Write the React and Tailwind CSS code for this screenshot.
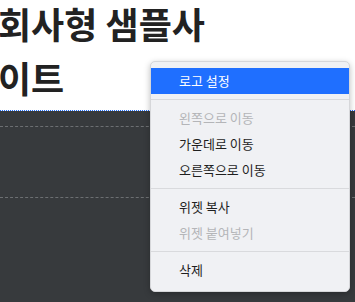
import React from "react";

const font = { fontFamily: '"Noto Sans CJK KR", "Noto Sans", sans-serif' };

function Item({ children, active, disabled }) {
  return (
    <div
      className={
        "h-[26px] flex items-center pl-[28px] text-[13px] " +
        (active
          ? "bg-[#1f6fff] text-white"
          : disabled
          ? "text-[#b4b5b8]"
          : "text-[#1f1f1f]")
      }
    >
      {children}
    </div>
  );
}

function Sep() {
  return <div className="h-px bg-[#d9dadd] my-[5px]" />;
}

export default function App() {
  return (
    <div className="relative w-[355px] h-[302px] overflow-hidden bg-white" style={font}>
      <div className="h-[110px] w-[218px] -ml-[2px] flow-root">
        <h1 className="relative -top-[4px] text-[36px] font-bold leading-[54px] text-[#222]">
          회사형 샘플사이트
        </h1>
      </div>
      <div className="h-px border-t border-dotted border-[#1f6fff]" />
      <div className="h-[191px] bg-[#373a3d] pt-[15px]">
        <div className="border-t border-dashed border-[#6c6f72]" />
        <div className="h-[70px]" />
        <div className="border-t border-dashed border-[#6c6f72]" />
      </div>
      <div className="absolute left-[150px] top-[61px] w-[200px] rounded-[5px] bg-[#f0f1f4] border border-[#d6d7da] shadow-[0_2px_6px_rgba(0,0,0,0.25)] pt-[6px] pb-[8px]">
        <Item active>로고 설정</Item>
        <Sep />
        <Item disabled>왼쪽으로 이동</Item>
        <Item>가운데로 이동</Item>
        <Item>오른쪽으로 이동</Item>
        <Sep />
        <Item>위젯 복사</Item>
        <Item disabled>위젯 붙여넣기</Item>
        <Sep />
        <Item>삭제</Item>
      </div>
    </div>
  );
}
